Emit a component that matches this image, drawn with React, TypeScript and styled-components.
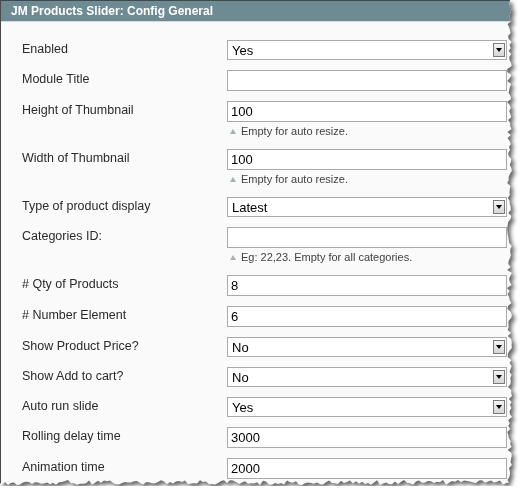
import React from "react";
import styled, { createGlobalStyle } from "styled-components";

const GlobalStyle = createGlobalStyle`
  html, body {
    margin: 0;
    padding: 0;
    background: #ffffff;
  }
  body {
    font-family: "Liberation Sans", Arial, sans-serif;
  }
`;

const PANEL_W = 513;
const PANEL_H = 486;

// torn paper edge on the right and bottom side
function tornEdge(): string {
  let seed = 7;
  const rand = () => {
    seed = (seed * 9301 + 49297) % 233280;
    return seed / 233280;
  };
  const pts: string[] = ["0px 0px", `${PANEL_W - 3}px 0px`];
  for (let y = 3; y < PANEL_H - 4; y += 3) {
    pts.push(`${(PANEL_W - 1 - rand() * 5).toFixed(1)}px ${y}px`);
  }
  for (let x = PANEL_W - 4; x > 0; x -= 3) {
    pts.push(`${x}px ${(PANEL_H - 1 - rand() * 5).toFixed(1)}px`);
  }
  pts.push(`0px ${PANEL_H - 3}px`);
  return `polygon(${pts.join(", ")})`;
}

const Shadow = styled.div`
  width: ${PANEL_W}px;
  filter: drop-shadow(3px 3px 2px rgba(0, 0, 0, 0.6));
`;

const Panel = styled.div`
  width: ${PANEL_W}px;
  height: ${PANEL_H}px;
  box-sizing: border-box;
  background: #fafafa;
  border-left: 1px solid #4a4a4a;
  clip-path: ${tornEdge()};
`;

const Header = styled.div`
  height: 22px;
  box-sizing: border-box;
  border-top: 1px solid #3f4a4e;
  border-bottom: 1px solid #d4d9db;
  background: #6e8a93;
  color: #ffffff;
  font-size: 12px;
  font-weight: bold;
  line-height: 20px;
  padding-left: 10px;
`;

const Form = styled.div`
  padding: 18px 0 0 21px;
`;

const Row = styled.div`
  display: flex;
  align-items: flex-start;
  margin-bottom: 10px;
`;

const Label = styled.div`
  width: 205px;
  padding-top: 2px;
  font-size: 12.5px;
  line-height: 15px;
  color: #2a2a2a;
`;

const Value = styled.div`
  width: 280px;
`;

const TextBox = styled.div`
  height: 21px;
  box-sizing: border-box;
  border: 1px solid #aaaaaa;
  background: #ffffff;
  font-size: 13px;
  line-height: 19px;
  padding-left: 3px;
  color: #000000;
`;

const SelectBox = styled.div`
  height: 20px;
  box-sizing: border-box;
  border: 1px solid #aaaaaa;
  background: #ffffff;
  display: flex;
  align-items: center;
  justify-content: space-between;
  padding: 0 1px 0 4px;
  font-size: 13px;
  color: #000000;
`;

const ArrowButton = styled.div`
  width: 12px;
  height: 14px;
  box-sizing: border-box;
  border: 1px solid #7a7a7a;
  background: linear-gradient(#f4f4f4, #d6d6d6);
  display: flex;
  align-items: center;
  justify-content: center;
  &::after {
    content: "";
    border-left: 3.5px solid transparent;
    border-right: 3.5px solid transparent;
    border-top: 4px solid #000000;
  }
`;

const Note = styled.div`
  height: 17px;
  box-sizing: border-box;
  padding: 2px 0 0 3px;
  display: flex;
  align-items: center;
  font-size: 11px;
  line-height: 13px;
  color: #404040;
  &::before {
    content: "";
    margin-right: 5px;
    border-left: 3.5px solid transparent;
    border-right: 3.5px solid transparent;
    border-bottom: 5px solid #a7afb4;
  }
`;

type Field = {
  label: string;
  kind: "text" | "select";
  value: string;
  note?: string;
};

const fields: Field[] = [
  { label: "Enabled", kind: "select", value: "Yes" },
  { label: "Module Title", kind: "text", value: "" },
  { label: "Height of Thumbnail", kind: "text", value: "100", note: "Empty for auto resize." },
  { label: "Width of Thumbnail", kind: "text", value: "100", note: "Empty for auto resize." },
  { label: "Type of product display", kind: "select", value: "Latest" },
  { label: "Categories ID:", kind: "text", value: "", note: "Eg: 22,23. Empty for all categories." },
  { label: "# Qty of Products", kind: "text", value: "8" },
  { label: "# Number Element", kind: "text", value: "6" },
  { label: "Show Product Price?", kind: "select", value: "No" },
  { label: "Show Add to cart?", kind: "select", value: "No" },
  { label: "Auto run slide", kind: "select", value: "Yes" },
  { label: "Rolling delay time", kind: "text", value: "3000" },
  { label: "Animation time", kind: "text", value: "2000" },
];

export default function App() {
  return (
    <>
      <GlobalStyle />
      <Shadow>
        <Panel>
          <Header>JM Products Slider: Config General</Header>
          <Form>
            {fields.map((f) => (
              <Row key={f.label}>
                <Label>{f.label}</Label>
                <Value>
                  {f.kind === "select" ? (
                    <SelectBox>
                      <span>{f.value}</span>
                      <ArrowButton />
                    </SelectBox>
                  ) : (
                    <TextBox>{f.value}</TextBox>
                  )}
                  {f.note && <Note>{f.note}</Note>}
                </Value>
              </Row>
            ))}
          </Form>
        </Panel>
      </Shadow>
    </>
  );
}
